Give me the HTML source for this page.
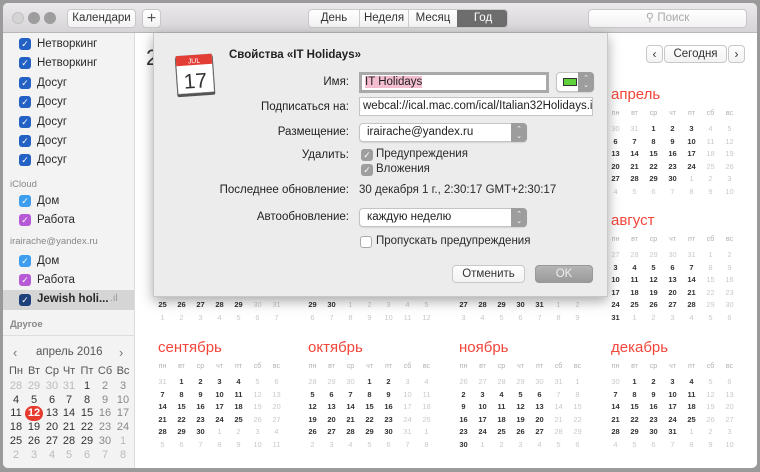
<!DOCTYPE html>
<html><head><meta charset="utf-8"><style>
*{box-sizing:border-box;margin:0;padding:0}
body{width:760px;height:472px;background:#9a9a9a;font-family:"Liberation Sans","DejaVu Sans",sans-serif;position:relative;overflow:hidden;color:#222}
.a{position:absolute;white-space:nowrap}
#win{position:absolute;left:3px;top:3px;width:754px;height:465px;background:#fff;border-radius:5px;overflow:hidden}
#tb{position:absolute;left:0;top:0;width:754px;height:30px;background:linear-gradient(#ebe9eb,#d6d4d6);border-bottom:1px solid #b8b8b8}
.btn{position:absolute;background:linear-gradient(#fff,#f2f2f2);border:1px solid #c8c8c8;border-radius:4px;font-size:11.5px;text-align:center;line-height:17px;color:#333}
#side{position:absolute;left:-3px;top:-3px;width:135px;height:468px;background:#f3f3f3;border-right:1px solid #dcdcdc}
.cb{position:absolute;width:12px;height:12px;border-radius:3px;background:#2461c4;color:#fff;font-size:9px;line-height:12px;text-align:center}
.lab{position:absolute;font-size:11.5px;color:#2a2a2a;white-space:nowrap}
.grp{position:absolute;font-size:9.5px;color:#888;font-weight:bold;white-space:nowrap}
.mn{position:absolute;font-size:15px;color:#f2463b}
.d{position:absolute;width:19px;text-align:center;font-size:7.5px;font-weight:bold;color:#333}
.g{color:#c9c9c9;font-weight:normal}
.h{color:#b0b0b0;font-weight:normal;font-size:7px}
#sheet{position:absolute;left:150px;top:30px;width:455px;height:264px;background:#ececec;border:1px solid #c8c8c8;border-top:none;box-shadow:0 4px 12px rgba(0,0,0,.35)}
.sl{position:absolute;font-size:11.5px;color:#222;text-align:right;width:195px;left:0}
.fld{position:absolute;background:#fff;border:1px solid #c4c4c4;font-size:11.5px;padding-left:3px;line-height:17px;white-space:nowrap}
.pop{position:absolute;background:#fff;border:1px solid #c4c4c4;border-radius:4px;font-size:11.5px;padding-left:7px;line-height:17px;box-shadow:0 1px 1px rgba(0,0,0,.1)}
.ar{position:absolute;right:-1px;top:-1px;width:16px;height:19px;background:#9d9d9d;border-radius:0 4px 4px 0;color:#fff;font-size:7px;line-height:7px;text-align:center;padding-top:3px}
.mc{position:absolute;width:18px;text-align:center;font-size:11px;color:#333;line-height:13px}
</style></head><body>
<div id="win">
<div id="side"></div>
<div id="tb">
<div class="a" style="left:9px;top:9px;width:12px;height:12px;border-radius:6px;background:#d4d4d4;border:1px solid #c2c2c2"></div>
<div class="a" style="left:25px;top:9px;width:12px;height:12px;border-radius:6px;background:#9d9d9d"></div>
<div class="a" style="left:41px;top:9px;width:12px;height:12px;border-radius:6px;background:#9d9d9d"></div>
<div class="btn" style="left:64px;top:6px;width:69px;height:19px">Календари</div>
<div class="btn" style="left:139px;top:6px;width:19px;height:19px;font-size:16px;color:#555">+</div>
<div class="btn" style="left:305px;top:6px;width:200px;height:19px;overflow:hidden">
<div class="a" style="left:0;width:50px;top:0">День</div>
<div class="a" style="left:50px;width:49px;top:0;border-left:1px solid #ccc">Неделя</div>
<div class="a" style="left:99px;width:49px;top:0;border-left:1px solid #ccc">Месяц</div>
<div class="a" style="left:148px;width:52px;top:-1px;height:19px;background:#6d6d6d;color:#fff;line-height:19px">Год</div>
</div>
<div class="btn" style="left:585px;top:6px;width:159px;height:19px;color:#aaa">⚲ Поиск</div>
</div>
<div class="a" style="left:143px;top:42px;font-size:22px;color:#333">2015</div>
<div class="btn" style="left:643px;top:42px;width:17px;height:18px;font-size:12px">‹</div>
<div class="btn" style="left:661px;top:42px;width:63px;height:18px">Сегодня</div>
<div class="btn" style="left:725px;top:42px;width:17px;height:18px;font-size:12px">›</div>
<div id="cal"></div>
<div id="sheet">
<svg class="a" style="left:18px;top:17px" width="46" height="50" viewBox="0 0 46 50"><g transform="rotate(-4 23 25)"><rect x="4" y="6" width="38" height="40" rx="2" fill="#555"/><rect x="5" y="5" width="36" height="38" rx="1" fill="#fff" stroke="#999" stroke-width=".5"/><rect x="5" y="5" width="36" height="10" fill="#e33e36"/><text x="23" y="13" font-size="7" fill="#fff" text-anchor="middle" font-family="Liberation Sans">JUL</text><text x="23" y="38" font-size="21" fill="#333" text-anchor="middle" font-family="Liberation Sans">17</text></g></svg>
<div class="a" style="left:75px;top:16px;font-size:11.5px;font-weight:bold">Свойства «IT Holidays»</div>
<div class="sl" style="top:43px">Имя:</div>
<div class="fld" style="left:205px;top:39px;width:190px;height:21px;border:3px solid #a9a9a9;line-height:15px"><span style="background:#f4bdd0">IT Holidays</span></div>
<div class="pop" style="left:402px;top:39px;width:38px;height:20px"><div class="a" style="left:6px;top:5px;width:14px;height:8px;background:#5fd13a;border:1px solid #333"></div><div class="ar" style="height:20px">⌃<br>⌄</div></div>
<div class="sl" style="top:68px">Подписаться на:</div>
<div class="fld" style="left:205px;top:64px;width:234px;height:19px;overflow:hidden">webcal://ical.mac.com/ical/Italian32Holidays.ics</div>
<div class="sl" style="top:93px">Размещение:</div>
<div class="pop" style="left:205px;top:90px;width:168px;height:19px">irairache@yandex.ru<div class="ar">⌃<br>⌄</div></div>
<div class="sl" style="top:116px">Удалить:</div>
<div class="cb" style="left:207px;top:116px;background:#9e9e9e">✓</div><div class="lab" style="left:222px;top:115px">Предупреждения</div>
<div class="cb" style="left:207px;top:131px;background:#9e9e9e">✓</div><div class="lab" style="left:222px;top:130px">Вложения</div>
<div class="sl" style="top:151px">Последнее обновление:</div>
<div class="lab" style="left:205px;top:151px">30 декабря 1 г., 2:30:17 GMT+2:30:17</div>
<div class="sl" style="top:178px">Автообновление:</div>
<div class="pop" style="left:205px;top:175px;width:168px;height:19px">каждую неделю<div class="ar">⌃<br>⌄</div></div>
<div class="cb" style="left:206px;top:203px;background:#fff;border:1px solid #aaa"></div><div class="lab" style="left:222px;top:202px">Пропускать предупреждения</div>
<div class="btn" style="left:298px;top:232px;width:73px;height:18px">Отменить</div>
<div class="btn" style="left:381px;top:232px;width:58px;height:18px;background:linear-gradient(#b4b4b4,#9a9a9a);color:#eee;border-color:#999">OK</div>
</div>
</div>
<script>
var cal=document.getElementById('cal'),h='';
var names=['январь','февраль','март','апрель','май','июнь','июль','август','сентябрь','октябрь','ноябрь','декабрь'];
var wd=['пн','вт','ср','чт','пт','сб','вс'];
var cx=[155,305,456,608],ty=[83,209,336];
for(var m=0;m<12;m++){var c=m%4,r=Math.floor(m/4),X=cx[c],Y=ty[r];
h+='<div class="mn" style="left:'+X+'px;top:'+Y+'px">'+names[m]+'</div>';
for(var k=0;k<7;k++)h+='<div class="d h" style="left:'+(X-5+19*k)+'px;top:'+(Y+24)+'px">'+wd[k]+'</div>';
var f=(new Date(2015,m,1).getDay()+6)%7,start=new Date(2015,m,1-f);
for(var i=0;i<42;i++){var dt=new Date(start.getFullYear(),start.getMonth(),start.getDate()+i);var cur=dt.getMonth()==m;var we=i%7>4;
h+='<div class="d'+((!cur||we)?' g':'')+'" style="left:'+(X-5+19*(i%7))+'px;top:'+(Y+38+12.6*Math.floor(i/7))+'px">'+dt.getDate()+'</div>';}}
cal.innerHTML=h;
var s='',items=[['Нетворкинг',44],['Нетворкинг',63],['Досуг',83],['Досуг',102],['Досуг',122],['Досуг',141],['Досуг',160]];
items.forEach(function(t){s+='<div class="cb" style="left:19px;top:'+(t[1]-6)+'px">✓</div><div class="lab" style="left:37px;top:'+(t[1]-6)+'px">'+t[0]+'</div>'});
s+='<div class="grp" style="left:10px;top:179px;font-weight:normal">iCloud</div>';
s+='<div class="cb" style="left:19px;top:195px;background:#3d9ef0">✓</div><div class="lab" style="left:37px;top:195px">Дом</div>';
s+='<div class="cb" style="left:19px;top:214px;background:#b65ad6">✓</div><div class="lab" style="left:37px;top:214px">Работа</div>';
s+='<div class="grp" style="left:10px;top:236px;font-weight:normal">irairache@yandex.ru</div>';
s+='<div class="cb" style="left:19px;top:255px;background:#3d9ef0">✓</div><div class="lab" style="left:37px;top:255px">Дом</div>';
s+='<div class="cb" style="left:19px;top:274px;background:#b65ad6">✓</div><div class="lab" style="left:37px;top:274px">Работа</div>';
s+='<div class="a" style="left:0;top:290px;width:134px;height:20px;background:#d5d5d5"></div>';
s+='<div class="cb" style="left:19px;top:294px;background:#1d3f7a">✓</div><div class="lab" style="left:37px;top:293px;font-weight:bold">Jewish holi...</div><div class="a" style="left:110px;top:293px;font-size:10px;color:#999">.ıl</div>';
s+='<div class="grp" style="left:10px;top:319px">Другое</div>';
s+='<div class="a" style="left:0;top:335px;width:134px;height:133px;background:#f3f3f3;border-top:1px solid #ddd"></div>';
s+='<div class="a" style="left:13px;top:345px;font-size:13px;color:#777">‹</div><div class="a" style="left:119px;top:345px;font-size:13px;color:#777">›</div>';
s+='<div class="a" style="left:36px;top:346px;font-size:11.5px;color:#555">апрель 2016</div>';
var dn=['Пн','Вт','Ср','Чт','Пт','Сб','Вс'],mx=[7,25,43,60,78,96,114];
for(var k=0;k<7;k++)s+='<div class="mc" style="left:'+mx[k]+'px;top:365px;color:#555">'+dn[k]+'</div>';
for(var i=0;i<42;i++){var dt=new Date(2016,2,28+i),cur=dt.getMonth()==3,we=i%7>4,col=!cur?'#bbb':(we?'#888':'#333');
var st2='';if(cur&&dt.getDate()==12)st2='background:#e63a2e;color:#fff;border-radius:8px;font-weight:bold;height:15px;line-height:15px;margin-top:-1px;';
s+='<div class="mc" style="left:'+mx[i%7]+'px;top:'+(380+13.7*Math.floor(i/7))+'px;color:'+col+';'+st2+'">'+dt.getDate()+'</div>';}
document.getElementById('side').innerHTML=s;
</script>
</body></html>
